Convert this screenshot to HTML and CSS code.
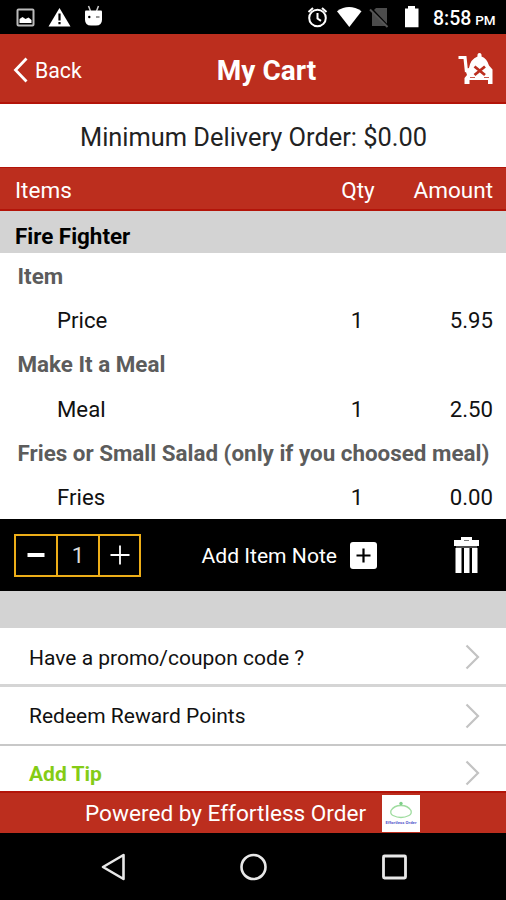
FILE: index.html
```html
<!DOCTYPE html>
<html lang="en">
<head>
<meta charset="utf-8">
<title>My Cart</title>
<link rel="stylesheet" href="styles.css">
</head>
<body>
<div class="screen">
  <div class="status">
    <svg class="status-left" width="110" height="34" viewBox="0 0 110 34">
      <rect x="17.5" y="9.5" width="16" height="16" rx="1" fill="none" stroke="#bbb" stroke-width="2"/>
      <path d="M19.500 23v-4l3-2 3 2 3-1.500 3 2.500v3z" fill="#fff"/>
      <path d="M59.500 8L70.500 26.500h-22z" fill="#fff"/>
      <path d="M59.500 13.500v7M59.500 22v2.300" stroke="#000" stroke-width="2.200"/>
      <path d="M88.500 6l2 5M98.500 6l-2 5" stroke="#ccc" stroke-width="1.500"/>
      <path d="M86 10.500h15q1 0 1 1v8q0 6-6 6h-5q-6 0-6-6v-8q0-1 1-1z" fill="#fff"/>
      <circle cx="89.300" cy="17" r="1.200"/><path d="M96 17h3.500" stroke="#555" stroke-width="1.200"/>
    </svg>
    <svg class="status-right" width="120" height="34" viewBox="304 0 120 34">
      <g fill="none" stroke="#fff" stroke-width="2"><circle cx="317.500" cy="18" r="8.300"/><path d="M317.500 13v5.500l3.500 2.300M308.500 12l4.500-4M326.500 12l-4.500-4"/></g>
      <path d="M337 11.200Q349 3 361.500 11.200L349.300 27z" fill="#fff"/>
      <path d="M376 8h11v18h-15V12z" fill="#4c4c4c"/>
      <path d="M371 8.500L388.500 27" stroke="#000" stroke-width="2.500"/><path d="M370 9.500L387.500 27" stroke="#555" stroke-width="2"/>
      <path d="M405 8.500h3V6h7v2.500h3.500v18.800H405z" fill="#fff"/>
    </svg>
    <span class="clock">8:58 <small>PM</small></span>
  </div>

  <header class="topbar">
    <a class="back"><svg width="16" height="26" viewBox="0 0 16 26"><path d="M14.500 1.500L3.500 13l11 11.500" fill="none" stroke="#fff" stroke-width="2.800"/></svg><span>Back</span></a>
    <h1>My Cart</h1>
    <svg class="clear" width="36" height="34" viewBox="0 0 36 34">
      <path d="M0.500 5.500H7L8.500 20" fill="none" stroke="#fff" stroke-width="3.200"/>
      <path d="M7 17L11 16Q12.500 7 19.500 4.500Q19 1 21.500 1T23.500 4.500Q29 6.500 31 13.500L34.500 17.500V32h-4.500v-4H11.500v4H6.500V26L9 23z" fill="#fff"/>
      <path d="M16.500 14.500l10.500 8.500M27 14.500l-10.500 8.500" stroke="#bc2e1e" stroke-width="2.800"/>
      <path d="M12 25.500h5M26 25.500h5" stroke="#bc2e1e" stroke-width=".8"/>
    </svg>
  </header>

  <p class="minimum"><span>Minimum Delivery Order: $0.00</span></p>

  <div class="row head"><span>Items</span><span class="qty">Qty</span><span class="amount">Amount</span></div>
  <h2 class="product"><span>Fire Fighter</span></h2>
  <section class="lines">
    <h3><span>Item</span></h3>
    <div class="row"><span class="name">Price</span><span class="qty">1</span><span class="amount">5.95</span></div>
    <h3><span>Make It a Meal</span></h3>
    <div class="row"><span class="name">Meal</span><span class="qty">1</span><span class="amount">2.50</span></div>
    <h3><span>Fries or Small Salad (only if you choosed meal)</span></h3>
    <div class="row"><span class="name">Fries</span><span class="qty">1</span><span class="amount">0.00</span></div>
  </section>

  <div class="actions">
    <div class="stepper">
      <button aria-label="Less"><svg width="22" height="22" viewBox="0 0 22 22"><path d="M2.500 11h17" stroke="#fff" stroke-width="4"/></svg></button>
      <output>1</output>
      <button aria-label="More"><svg width="22" height="22" viewBox="0 0 22 22"><path d="M1.500 11h19M11 1.500v19" stroke="#fff" stroke-width="1.800"/></svg></button>
    </div>
    <a class="note"><span>Add Item Note</span><svg width="27" height="27" viewBox="0 0 27 27"><rect width="27" height="27" rx="3" fill="#fff"/><path d="M6.500 13.500h14M13.500 6.500v14" stroke="#000" stroke-width="2.200"/></svg></a>
    <svg class="trash" width="25" height="38" viewBox="0 0 25 38"><path d="M0 4h7V1h11v3h7v6H0zM1.500 12h6v25h-6zM10 12h5.500v25H10zM18 12h5.500v25H18z" fill="#fff"/><path d="M10 4.500h5" stroke="#777" stroke-width="1"/><path d="M2 11h21" stroke="#999"/></svg>
  </div>
  <div class="gap"></div>

  <nav class="options">
    <a><span>Have a promo/coupon code ?</span><svg width="15" height="26" viewBox="0 0 15 26"><path d="M1.500 1.500L13 13 1.500 24.500" fill="none" stroke="#c3c3c3" stroke-width="2.200"/></svg></a>
    <a><span>Redeem Reward Points</span><svg width="15" height="26" viewBox="0 0 15 26"><path d="M1.500 1.500L13 13 1.500 24.500" fill="none" stroke="#c3c3c3" stroke-width="2.200"/></svg></a>
    <a class="tip"><span>Add Tip</span><svg width="15" height="26" viewBox="0 0 15 26"><path d="M1.500 1.500L13 13 1.500 24.500" fill="none" stroke="#c3c3c3" stroke-width="2.200"/></svg></a>
  </nav>

  <footer class="powered">
    <span>Powered by Effortless Order</span>
    <svg width="38" height="37" viewBox="0 0 38 37"><rect width="38" height="37" fill="#fff"/><path d="M11 20.500Q8 19 9 15.500Q12 10.500 19 10.500Q26 10.500 29 15.500Q30 19 27 20.500Q23 22.500 19 22.500Q15 22.500 11 20.500z" fill="none" stroke="#9fdc9f" stroke-width="1.300"/><circle cx="19" cy="8.500" r="1.700" fill="#7fcf8a"/><text x="3.500" y="29" textLength="31" lengthAdjust="spacingAndGlyphs" class="logo-name">Effortless Order</text></svg>
  </footer>
  <div class="sysnav">
    <svg width="28" height="30" viewBox="0 0 28 30"><path d="M23.500 3v24L3 15z" fill="none" stroke="#e8e8e8" stroke-width="2.600" stroke-linejoin="round"/></svg>
    <svg width="28" height="30" viewBox="0 0 28 30"><circle cx="13.500" cy="15" r="12" fill="none" stroke="#e8e8e8" stroke-width="2.600"/></svg>
    <svg width="28" height="30" viewBox="0 0 28 30"><rect x="3.500" y="4" width="22" height="22" rx="1" fill="none" stroke="#e8e8e8" stroke-width="2.800"/></svg>
  </div>
</div>
</body>
</html>
```
FILE: styles.css
```css
* { box-sizing: border-box; margin: 0; padding: 0; }
body { font-family: Roboto, sans-serif; font-size: 22.2px; color: #111; background: #fff; }
svg { display: block; flex: none; }
.screen { width: 506px; height: 900px; display: flex; flex-direction: column; overflow: hidden; }
.screen > * { flex: none; }

.status { height: 34px; background: #000; display: flex; align-items: center; }
.status-right { margin-left: 194px; }
.clock { margin-left: 9px; padding-top: 3px; color: #fff; font-size: 19.5px; font-weight: 500; white-space: nowrap; }
.clock small { font-size: 13.5px; margin-left: -1px; }

.topbar { height: 70px; background: #bc2e1e; border-bottom: 2px solid #b31409; color: #fff; display: grid; grid-template-columns: 1fr auto 1fr; align-items: center; padding: 4px 12px 0; }
.back { display: flex; align-items: center; gap: 7px; font-size: 21.3px; }
.topbar h1 { font-size: 28px; font-weight: 700; margin: 1px -1px 0 26px; }
.clear { justify-self: end; margin-top: -2px; }

.minimum { height: 63px; display: flex; align-items: center; justify-content: center; font-size: 25.4px; padding: 3px 0 0 1px; white-space: nowrap; color: #222; }

.row { display: grid; grid-template-columns: 1fr 40px 116px; align-items: center; padding: 1px 13px 0 15px; }
.qty { text-align: center; }
.amount { text-align: right; }
.head { height: 44px; background: #bc2e1e; border-top: 1px solid #b31409; border-bottom: 2px solid #b31409; color: #fff; font-size: 22.5px; padding-top: 3px; }
.head .qty { padding-left: 2px; }
.product { height: 42px; padding: 9px 15px 0; background: #d3d3d3; font-size: 22.4px; line-height: 32px; font-weight: 700; color: #000; }
.lines { height: 266px; display: grid; grid-template-rows: repeat(6, 1fr); }
.lines h3 { font-size: 22.4px; font-weight: 700; color: #5c5c5c; padding: 1px 0 0 17.5px; display: flex; align-items: center; white-space: nowrap; }
.name { padding-left: 42px; }

.actions { height: 72px; background: #000; color: #fff; display: flex; align-items: center; padding: 0 27px 0 14px; }
.stepper { display: grid; grid-template-columns: 40px 40px 39px; gap: 2px; width: 127px; height: 43px; border: 2px solid #edae18; background: #edae18; }
.stepper > * { background: #000; border: 0; display: flex; align-items: center; justify-content: center; color: #ddd; }
.note { display: flex; align-items: center; gap: 13px; margin-left: 60.5px; font-size: 21.1px; }
.trash { margin-left: auto; }
.gap { height: 37px; background: #d3d3d3; }

.options { height: 163px; overflow: hidden; font-size: 21px; }
.options a { height: 59px; padding: 2px 26px 0 29px; display: flex; align-items: center; justify-content: space-between; border-bottom: 3px solid #d5d5d5; }
.options span { padding-top: 1px; }
.options a + a { padding-top: 0; border-bottom: 2px solid #c8c8c8; }
.options .tip { height: 54px; border: 0; color: #84cc16; font-weight: 700; }
.options a + .tip { border: 0; }
.tip span { padding-top: 2px; }

.powered { height: 42px; background: #bc2e1e; border-top: 2px solid #b31409; color: #fff; display: flex; align-items: center; padding-left: 85px; gap: 16px; font-size: 22.6px; white-space: nowrap; }
.logo-name { font-size: 4px; font-weight: 700; fill: #5858cc; }
.sysnav { height: 67px; background: #000; display: flex; justify-content: space-between; align-items: center; padding: 0 98px 0 100px; }
```
